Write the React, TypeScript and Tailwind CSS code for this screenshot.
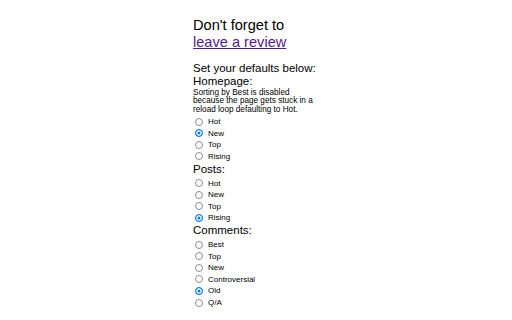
import React, {useState} from "react";

interface GroupProps {
  name: string;
  title: string;
  options: Array<string>;
  defaultValue: string;
  first?: boolean;
}

const RadioGroup = ({name, title, options, defaultValue, first}: GroupProps) => {
  const [value, setValue] = useState(defaultValue);

  return (
    <div>
      {!first && <h3 className="mt-[0.5px] mb-[2px] text-[11.5px] leading-[12.6px] font-normal">{title}</h3>}
      {options.map(option => (
        <label key={option} className="flex h-[11.6px] items-center text-[8px] leading-[9px]">
          <input
            type="radio"
            name={name}
            value={option}
            checked={value === option}
            onChange={() => setValue(option)}
            className="ml-[1.5px] mr-[5.5px] h-[8px] w-[8px] shrink-0 appearance-none rounded-full border border-[#8d8d8d] bg-white checked:border-[#0075ff] checked:bg-[#0075ff] checked:shadow-[inset_0_0_0_1.5px_white]"
          />
          <span>{option}</span>
        </label>
      ))}
    </div>
  );
}

const App = () => {
  return (
    <div className="flex h-[320px] w-full justify-center overflow-hidden bg-white font-['Liberation_Sans',Arial,sans-serif] text-black">
      <div className="w-[126px] pt-[16.5px]">
        <h2 className="whitespace-nowrap text-[14.6px] leading-[17px] font-normal">
          Don't forget to<br/>
          <a href="#" className="text-[#551a8b] underline">leave a review</a>
        </h2>

        <h3 className="mt-[11.9px] whitespace-nowrap text-[11.5px] leading-[12.6px] font-normal">Set your defaults below:</h3>
        <h3 className="text-[11.5px] leading-[12.6px] font-normal">Homepage:</h3>
        <p className="mt-[1.5px] whitespace-nowrap text-[8.2px] leading-[8.3px]">
          Sorting by Best is disabled<br/>
          because the page gets stuck in a<br/>
          reload loop defaulting to Hot.
        </p>

        <div className="mt-[1.9px]">
          <RadioGroup first name="homepage" title="Homepage:" options={['Hot', 'New', 'Top', 'Rising']} defaultValue="New"/>
        </div>
        <RadioGroup name="posts" title="Posts:" options={['Hot', 'New', 'Top', 'Rising']} defaultValue="Rising"/>
        <RadioGroup name="comments" title="Comments:" options={['Best', 'Top', 'New', 'Controversial', 'Old', 'Q/A']} defaultValue="Old"/>
      </div>
    </div>
  );
}

export default App;
